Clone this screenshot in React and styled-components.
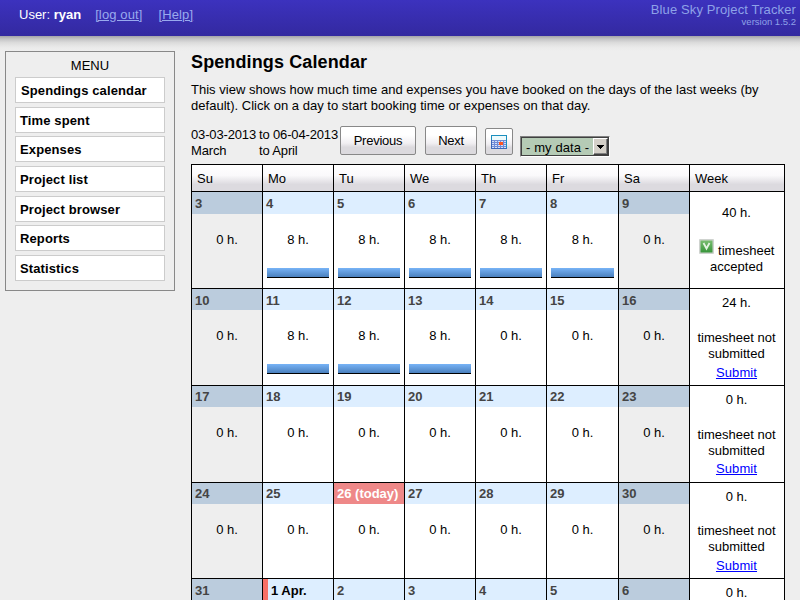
import React from 'react';
import styled, { createGlobalStyle } from 'styled-components';

const GlobalStyle = createGlobalStyle`
    html, body {
        margin: 0;
        height: 600px;
        overflow: hidden;
        background: #eeeeee;
    }
    body {
        font-family: 'Liberation Sans', Arial, sans-serif;
        font-size: 13px;
        line-height: 16px;
        color: #000;
    }
`;

const TopBar = styled.header`
    display: flex;
    justify-content: space-between;
    height: 36px;
    background: linear-gradient(#3c32be, #3329a0);
    color: white;
`;

const UserInfo = styled.div`
    display: flex;
    padding: 7px 0 0 19px;
`;

const TopLink = styled.a`
    margin-left: ${props => props.$gap}px;
    color: #99aaee;
    letter-spacing: 0.12px;
    text-decoration: underline;
`;

const Product = styled.div`
    padding: 2px 4px 0 0;
    text-align: right;
    color: #8ea2e8;
    letter-spacing: 0.12px;
    line-height: 15px;
`;

const Version = styled.div`
    font-size: 9.5px;
    letter-spacing: 0;
    line-height: 9px;
`;

const Shadow = styled.div`
    height: 15px;
    background: linear-gradient(#a3a3a8, #c4c4c6 20%, #dcdcdc 45%, #eaeaea 75%, #eeeeee);
`;

const Page = styled.div`
    display: flex;
    align-items: flex-start;
`;

const Menu = styled.nav`
    box-sizing: border-box;
    flex: none;
    width: 170px;
    height: 240px;
    margin-left: 5px;
    padding: 6px 9px 0;
    border: 1px solid #888;
`;

const MenuTitle = styled.div`
    height: 19px;
    text-align: center;
`;

const MenuItem = styled.div`
    box-sizing: border-box;
    height: 26px;
    margin-bottom: 3.67px;
    padding-left: ${props => (props.$first ? 5 : 4)}px;
    border: 1px solid #ccc;
    background: white;
    font-weight: bold;
    letter-spacing: 0.12px;
    line-height: 25px;
`;

const Main = styled.main`
    width: 594px;
    margin-left: 16px;
`;

const Title = styled.h1`
    margin: 0;
    font-size: 18px;
    letter-spacing: 0.12px;
    line-height: 22px;
`;

const Intro = styled.p`
    margin: 9px 0 0;
    letter-spacing: 0.02px;
    white-space: nowrap;
`;

const Toolbar = styled.div`
    display: flex;
    align-items: flex-start;
    height: 39px;
    margin-top: 11px;
`;

const Range = styled.div`
    display: grid;
    grid-template-columns: 68px 81px;
    padding-top: 2px;
    letter-spacing: -0.15px;
    white-space: nowrap;
`;

const Button = styled.button`
    box-sizing: border-box;
    display: flex;
    align-items: center;
    justify-content: center;
    width: ${props => props.$width}px;
    height: ${props => props.$height || 29}px;
    margin: ${props => props.$top || 1}px ${props => props.$gap}px 0 0;
    padding: 0;
    border: 1px solid #888;
    border-radius: 2px;
    background: linear-gradient(#fff 30%, #f1eff2 60%, #dcdade 75%, #dcdade);
    font: inherit;
    letter-spacing: -0.25px;
    color: #000;
`;

const Select = styled.div`
    box-sizing: border-box;
    display: flex;
    width: 90px;
    height: 21px;
    margin-top: 11px;
    border: 1px solid;
    border-color: #808080 #fff #fff #808080;
    background: #b5cbb5;
    box-shadow: inset 1px 1px #404040, inset -1px -1px #404040;
`;

const SelectText = styled.span`
    flex: 1;
    padding-left: 5px;
    letter-spacing: 0.1px;
    line-height: 21px;
    white-space: nowrap;
`;

const SelectArrow = styled.span`
    box-sizing: border-box;
    display: flex;
    align-items: center;
    justify-content: center;
    width: 15px;
    height: 17px;
    margin: 1px;
    border: 1px solid;
    border-color: #fff #404040 #404040 #fff;
    background: #d4d0c8;
    box-shadow: inset -1px -1px #808080;
`;

const Calendar = styled.div`
    box-sizing: border-box;
    display: grid;
    grid-template-columns: repeat(5, 71px) 72px 71px 95px;
    grid-template-rows: 27px repeat(3, 97px) 96px 21px;
    width: 594px;
    border-top: 1px solid #000;
    border-left: 1px solid #000;
`;

const HeadCell = styled.div`
    padding-left: 5px;
    border-right: 1px solid #000;
    border-bottom: 1px solid #000;
    background: linear-gradient(#fff, #faf9fb 40%, #dcdadf 75%, #dcdadf);
    line-height: 27px;
`;

const Cell = styled.div`
    display: flex;
    flex-direction: column;
    border-right: 1px solid #000;
    border-bottom: ${props => (props.$open ? 'none' : '1px solid #000')};
    background: ${props => (props.$weekend ? '#eeeeee' : '#ffffff')};
`;

const headColors = {
    weekend: '#bbccdd',
    today: '#ee8888',
    weekday: '#ddeeff',
};

const DayHead = styled.div`
    box-sizing: border-box;
    height: ${props => props.$height}px;
    padding-left: 3px;
    border-left: ${props => (props.$monthStart ? '5px solid #f77066' : 'none')};
    background: ${props => headColors[props.$kind]};
    color: ${props => (props.$kind === 'today' ? '#fff' : props.$monthStart ? '#000' : '#444')};
    font-weight: bold;
    line-height: ${props => props.$line}px;
    white-space: nowrap;
`;

const Hours = styled.div`
    margin-top: ${props => props.$gap}px;
    text-align: center;
`;

const Bar = styled.div`
    height: 9px;
    margin: auto 4px ${props => props.$bottom}px;
    border-bottom: 1px solid #000;
    background: linear-gradient(#77b3f7, #4a80bd);
`;

const WeekCell = styled.div`
    padding: ${props => props.$top}px 1px 0 0;
    border-right: 1px solid #000;
    border-bottom: ${props => (props.$open ? 'none' : '1px solid #000')};
    background: white;
    text-align: center;
`;

const Status = styled.div`
    margin-top: ${props => props.$gap}px;
`;

const Submit = styled.a`
    display: block;
    margin-top: ${props => props.$gap}px;
    color: #0000ff;
    letter-spacing: 0.1px;
    text-decoration: underline;
`;

const CalendarIcon = () => (
    <svg width="16" height="14" viewBox="0 0 16 14" shapeRendering="crispEdges">
        <rect width="16" height="14" fill="#1b8fbe" />
        <rect x="1" y="1" width="14" height="4" fill="#edfafc" />
        <rect x="1" y="5" width="14" height="8" fill="#6f8bd6" />
        <path d="M1 6.5h14M1 8.5h14M1 10.5h14M1 12.5h14" stroke="#d5def7" strokeDasharray="2 1" />
        <rect x="8" y="7" width="4" height="3" fill="#ff5522" />
        <path d="M0 5v9M16 5v9M0 13.5h16" fill="none" stroke="#3c66b8" />
    </svg>
);

const AcceptedIcon = () => (
    <svg width="16" height="16" viewBox="0 0 16 16">
        <defs>
            <linearGradient id="accepted" x1="0" y1="0" x2="0" y2="1">
                <stop offset="0" stopColor="#79bd70" />
                <stop offset="1" stopColor="#37953a" />
            </linearGradient>
        </defs>
        <rect width="15" height="15" rx="1" fill="#cfd3cf" />
        <rect x="1.5" y="1.5" width="12" height="12" fill="url(#accepted)" />
        <path d="M4.5 4 7.5 9.5l3-5.5" fill="none" stroke="#e4f3e2" strokeWidth="1.8" />
    </svg>
);

const menu = ['Spendings calendar', 'Time spent', 'Expenses', 'Project list', 'Project browser', 'Reports', 'Statistics'];
const columns = ['Su', 'Mo', 'Tu', 'We', 'Th', 'Fr', 'Sa', 'Week'];

const weeks = [
    { days: ['3', '4', '5', '6', '7', '8', '9'], booked: [1, 2, 3, 4, 5], total: 40, accepted: true, head: 22, line: 24, barBottom: 10, statusGap: 18 },
    { days: ['10', '11', '12', '13', '14', '15', '16'], booked: [1, 2, 3], total: 24, head: 21, line: 24, barBottom: 11, statusGap: 19, submitGap: 3 },
    { days: ['17', '18', '19', '20', '21', '22', '23'], booked: [], total: 0, head: 21, line: 22, statusGap: 19, submitGap: 2 },
    { days: ['24', '25', '26 (today)', '27', '28', '29', '30'], booked: [], total: 0, head: 21, line: 22, statusGap: 18, submitGap: 3 },
    // only the day numbers and the total are open for the last week
    { days: ['31', '1 Apr.', '2', '3', '4', '5', '6'], booked: [], total: 0, head: 21, line: 24, open: true },
];

const Day = ({ label, index, week }) => {
    const weekend = index === 0 || index === 6;
    const kind = weekend ? 'weekend' : label.includes('today') ? 'today' : 'weekday';
    const booked = week.booked.includes(index);

    return (
        <Cell $weekend={weekend} $open={week.open}>
            <DayHead $kind={kind} $height={week.head} $line={week.line} $monthStart={label.includes('Apr')}>
                {label}
            </DayHead>
            {!week.open && <Hours $gap={18}>{booked ? 8 : 0} h.</Hours>}
            {booked && <Bar $bottom={week.barBottom} />}
        </Cell>
    );
};

const WeekStatus = ({ week }) => {
    if (week.accepted) {
        return <Status $gap={week.statusGap}><AcceptedIcon /> timesheet<br />accepted</Status>;
    }
    return (
        <>
            <Status $gap={week.statusGap}>timesheet not<br />submitted</Status>
            <Submit $gap={week.submitGap}>Submit</Submit>
        </>
    );
};

const Week = ({ week }) => (
    <>
        {week.days.map((label, i) => <Day key={label} label={label} index={i} week={week} />)}
        <WeekCell $top={week.accepted ? 13 : 6} $open={week.open}>
            <div>{week.total} h.</div>
            {!week.open && <WeekStatus week={week} />}
        </WeekCell>
    </>
);

const App = () => (
    <>
        <GlobalStyle />
        <TopBar>
            <UserInfo>
                <span>User: <b>ryan</b></span>
                <TopLink $gap={14}>[log out]</TopLink>
                <TopLink $gap={16}>[Help]</TopLink>
            </UserInfo>
            <Product>
                Blue Sky Project Tracker
                <Version>version 1.5.2</Version>
            </Product>
        </TopBar>
        <Shadow />
        <Page>
            <Menu>
                <MenuTitle>MENU</MenuTitle>
                {menu.map((item, i) => <MenuItem key={item} $first={i === 0}>{item}</MenuItem>)}
            </Menu>
            <Main>
                <Title>Spendings Calendar</Title>
                <Intro>
                    This view shows how much time and expenses you have booked on the days of the last weeks (by<br />
                    default). Click on a day to start booking time or expenses on that day.
                </Intro>
                <Toolbar>
                    <Range>
                        <span>03-03-2013</span><span>to 06-04-2013</span>
                        <span>March</span><span>to April</span>
                    </Range>
                    <Button $width={76} $gap={9}>Previous</Button>
                    <Button $width={52} $gap={8}>Next</Button>
                    <Button $width={28} $height={27} $top={3} $gap={7}><CalendarIcon /></Button>
                    <Select>
                        <SelectText>- my data -</SelectText>
                        <SelectArrow>
                            <svg width="7" height="4" shapeRendering="crispEdges"><path d="M0 0h7L3.5 4z" /></svg>
                        </SelectArrow>
                    </Select>
                </Toolbar>
                <Calendar>
                    {columns.map(name => <HeadCell key={name}>{name}</HeadCell>)}
                    {weeks.map(week => <Week key={week.days[0]} week={week} />)}
                </Calendar>
            </Main>
        </Page>
    </>
);

export default App;
